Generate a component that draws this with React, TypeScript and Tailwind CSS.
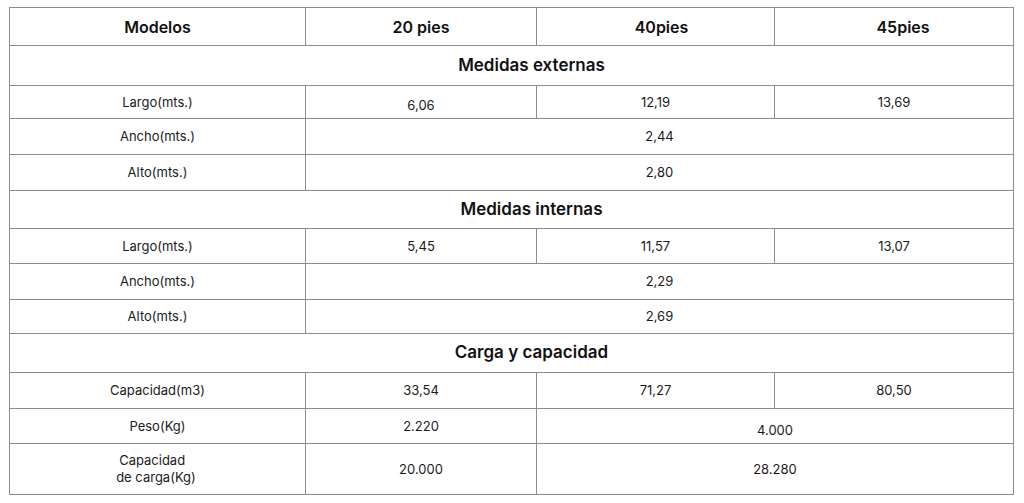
const font = { fontFamily: "Inter, 'Noto Sans', sans-serif" };

type Cell = { text: string | string[]; span?: number; cls?: string };
type Row = { h: string; cells: Cell[] };

const sections: { title: string; h: string; rows: Row[] }[] = [
  {
    title: "Medidas externas",
    h: "h-[40px]",
    rows: [
      { h: "h-[33px]", cells: [{ text: "Largo(mts.)" }, { text: "6,06", cls: "pt-[6px]" }, { text: "12,19" }, { text: "13,69" }] },
      { h: "h-[36px]", cells: [{ text: "Ancho(mts.)" }, { text: "2,44", span: 3 }] },
      { h: "h-[36px]", cells: [{ text: "Alto(mts.)" }, { text: "2,80", span: 3 }] },
    ],
  },
  {
    title: "Medidas internas",
    h: "h-[38px]",
    rows: [
      { h: "h-[35px]", cells: [{ text: "Largo(mts.)" }, { text: "5,45" }, { text: "11,57" }, { text: "13,07" }] },
      { h: "h-[36px]", cells: [{ text: "Ancho(mts.)" }, { text: "2,29", span: 3 }] },
      { h: "h-[34px]", cells: [{ text: "Alto(mts.)" }, { text: "2,69", span: 3 }] },
    ],
  },
  {
    title: "Carga y capacidad",
    h: "h-[39px]",
    rows: [
      { h: "h-[36px]", cells: [{ text: "Capacidad(m3)" }, { text: "33,54" }, { text: "71,27" }, { text: "80,50" }] },
      { h: "h-[35px]", cells: [{ text: "Peso(Kg)" }, { text: "2.220" }, { text: "4.000", span: 2, cls: "pt-[8px]" }] },
      { h: "h-[51px]", cells: [{ text: ["Capacidad", "de carga(Kg)"] }, { text: "20.000" }, { text: "28.280", span: 2 }] },
    ],
  },
];

const line = "border border-[#8c8c8c] text-center align-middle";
const td = `${line} text-[13px] text-[#1a1a1a] leading-[17px]`;
const th = `${line} text-[16px] font-semibold text-[#111]`;
const section = `${line} text-[17px] font-semibold text-[#111] pl-[40px]`;

export default function App() {
  return (
    <div className="bg-white w-[1024px] h-[503px] pt-[7px] pl-[9px]" style={font}>
      <table className="border-collapse table-fixed w-[1004px]">
        <colgroup>
          <col className="w-[296px]" />
          <col className="w-[231px]" />
          <col className="w-[238px]" />
          <col className="w-[239px]" />
        </colgroup>
        <thead>
          <tr className="h-[38px]">
            <th className={th}>Modelos</th>
            <th className={th}>20 pies</th>
            <th className={`${th} pl-[12px]`}>40pies</th>
            <th className={`${th} pl-[18px]`}>45pies</th>
          </tr>
        </thead>
        <tbody>
          {sections.map((s) => (
            <>
              <tr key={s.title} className={s.h}>
                <td colSpan={4} className={section}>
                  {s.title}
                </td>
              </tr>
              {s.rows.map((r, i) => (
                <tr key={s.title + i} className={r.h}>
                  {r.cells.map((c, j) => (
                    <td key={j} colSpan={c.span} className={`${td} ${c.cls ?? ""}`}>
                      {Array.isArray(c.text) ? (
                        <div className="inline-block text-left">
                          {c.text.map((t, k) => (
                            <div key={k} className={k === 1 ? "-ml-[3px]" : ""}>{t}</div>
                          ))}
                        </div>
                      ) : (
                        c.text
                      )}
                    </td>
                  ))}
                </tr>
              ))}
            </>
          ))}
        </tbody>
      </table>
    </div>
  );
}
